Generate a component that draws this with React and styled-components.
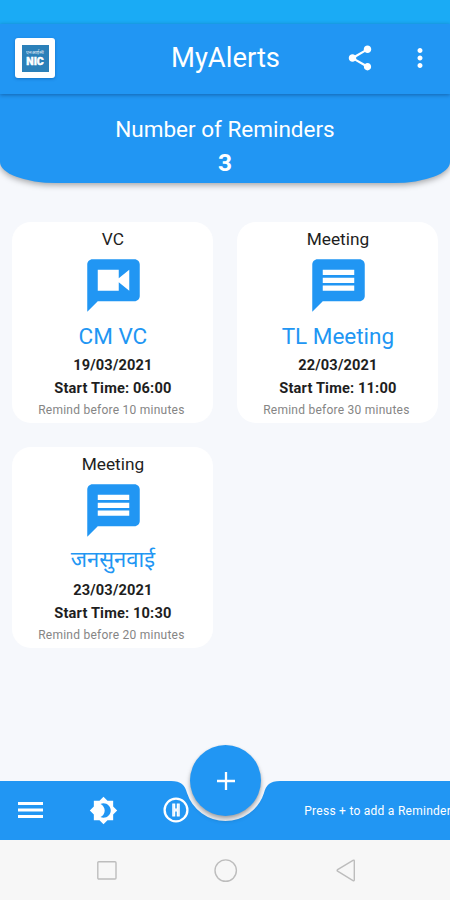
import styled, { createGlobalStyle } from "styled-components";
import { MdShare, MdMoreVert, MdMessage, MdBrightness4 } from "react-icons/md";

const VideoChat = ({ size }) => (
    <svg width={size} height={size} viewBox="0 0 24 24" fill="currentColor">
        <path d="M20 2H4c-1.1 0-2 .9-2 2v18l4-4h14c1.1 0 2-.9 2-2V4c0-1.1-.9-2-2-2zm-2 12l-4-3.2V14H6V6h8v3.2L18 6v8z" />
    </svg>
)

const reminders = [
    { type: "VC", title: "CM VC", date: "19/03/2021", time: "06:00", before: 10, Icon: VideoChat },
    { type: "Meeting", title: "TL Meeting", date: "22/03/2021", time: "11:00", before: 30, Icon: MdMessage },
    { type: "Meeting", title: "जनसुनवाई", date: "23/03/2021", time: "10:30", before: 20, Icon: MdMessage, hindi: true },
];

export default function App() {
    return (
        <Screen>
            <GlobalStyle />
            <StatusBar />
            <AppBar>
                <Logo>
                    <LogoInner>
                        <small>एनआईसी</small>
                        <b>NIC</b>
                    </LogoInner>
                </Logo>
                <AppTitle>MyAlerts</AppTitle>
                <Actions>
                    <MdShare size={30} />
                    <MdMoreVert size={30} />
                </Actions>
            </AppBar>
            <Summary>
                <p>Number of Reminders</p>
                <strong>{reminders.length}</strong>
            </Summary>
            <Grid>
                {reminders.map(({ type, title, date, time, before, Icon, hindi }) => (
                    <Card key={title}>
                        <Type>{type}</Type>
                        <Icon size={63} />
                        <Title $hindi={hindi}>{title}</Title>
                        <When>{date}</When>
                        <When>Start Time: {time}</When>
                        <Before>Remind before {before} minutes</Before>
                    </Card>
                ))}
            </Grid>
            <BottomBar>
                <AddButton>
                    <svg width="18" height="18" viewBox="0 0 18 18">
                        <path d="M9 0v18M0 9h18" stroke="#fff" strokeWidth="2.3" />
                    </svg>
                </AddButton>
                <BarIcons>
                    <svg width="25" height="16" viewBox="0 0 25 16">
                        <path d="M0 1.5h25M0 8h25M0 14.5h25" stroke="#fff" strokeWidth="2.9" />
                    </svg>
                    <MdBrightness4 size={29} />
                    <svg width="26" height="26" viewBox="0 0 26 26" fill="none" stroke="#fff">
                        <circle cx="13" cy="13" r="11.4" strokeWidth="2.3" />
                        <path
                            d="M9.9 7.2h1.7v4.9h2.8V7.2h1.7v11.6h-1.7v-4.9h-2.8v4.9H9.9z"
                            strokeWidth="1.3"
                            fill="#c4e3fc"
                        />
                    </svg>
                </BarIcons>
                <Hint>Press + to add a Reminder</Hint>
            </BottomBar>
            <NavBar>
                <svg width="20" height="19" viewBox="0 0 20 19">
                    <rect x="0.8" y="0.8" width="18.2" height="17.2" rx="1" />
                </svg>
                <svg width="24" height="24" viewBox="0 0 24 24">
                    <circle cx="10.7" cy="11.6" r="10.7" />
                </svg>
                <svg width="20" height="23" viewBox="0 0 20 23">
                    <path d="M17 1.3 1.6 10.6q-1 .8 0 1.6L17 21.6q1.3.6 1.3-.8V2q0-1.3-1.3-.7z" />
                </svg>
            </NavBar>
        </Screen>
    )
}

const GlobalStyle = createGlobalStyle`
* {
    box-sizing: border-box;
}
body {
    margin: 0;
    background-color: #f6f8fc;
    font-family: Roboto, "Noto Sans", sans-serif;
}
p {
    margin: 0;
}
`
const Screen = styled.div`
width: 450px;
height: 900px;
display: flex;
flex-direction: column;
overflow: hidden;
background-color: #f6f8fc;
`
const StatusBar = styled.div`
height: 24px;
flex-shrink: 0;
background-color: #1aabf5;
`
const AppBar = styled.header`
height: 70px;
flex-shrink: 0;
padding: 0 14px 0 15px;
display: grid;
grid-template-columns: 1fr auto 1fr;
align-items: center;
color: #ffffff;
background-color: #2196f3;
box-shadow: 0 1px 4px rgba(0, 40, 90, 0.45);
z-index: 1;
`
const Logo = styled.div`
width: 40px;
height: 40px;
padding: 6.5px;
margin-top: -2px;
border-radius: 3px;
background-color: #ffffff;
box-shadow: 0 1px 3px rgba(0, 50, 110, 0.35);
`
const LogoInner = styled.div`
height: 27px;
display: flex;
flex-direction: column;
align-items: center;
justify-content: center;
background-color: #2b80b9;
small {
    font-size: 5px;
    line-height: 7px;
    opacity: 0.85;
}
b {
    font-size: 10.5px;
    line-height: 12px;
    font-weight: 900;
    -webkit-text-stroke: 0.4px #ffffff;
}
`
const AppTitle = styled.h1`
margin: 0 0 2px;
font-size: 27.4px;
font-weight: 400;
line-height: 34px;
`
const Actions = styled.div`
display: flex;
justify-content: flex-end;
align-items: center;
gap: 30px;
margin-top: -2px;
margin-right: 1px;
`
const Summary = styled.section`
height: 89px;
flex-shrink: 0;
padding-top: 21px;
text-align: center;
color: #ffffff;
background-color: #2196f3;
border-radius: 0 0 56px 56px / 0 0 21px 21px;
box-shadow: 0 2px 6px rgba(0, 0, 0, 0.35);
p {
    font-size: 22.5px;
    line-height: 28px;
}
strong {
    display: block;
    font-size: 24.5px;
    line-height: 40px;
}
`
const Grid = styled.main`
flex: 1;
padding: 39px 12px 0 12.4px;
display: grid;
grid-template-columns: 201px 201px;
grid-auto-rows: 201px;
gap: 24.4px 24px;
`
const Card = styled.article`
display: flex;
flex-direction: column;
align-items: center;
padding-top: 6px;
border-radius: 19px;
background-color: #ffffff;
color: #1e1e1e;
svg {
    flex-shrink: 0;
    margin-top: 4px;
    margin-left: 1px;
    color: #2196f3;
}
`
const Type = styled.p`
font-size: 17.3px;
line-height: 22px;
`
const Title = styled.h2`
margin: 5px 0 3px;
height: 28px;
font-size: ${({ $hindi }) => ($hindi ? "22px" : "22.5px")};
font-weight: 400;
line-height: ${({ $hindi }) => ($hindi ? "26px" : "28px")};
color: #2196f3;
`
const When = styled.p`
font-size: 14.6px;
line-height: 23px;
font-weight: 700;
letter-spacing: 0.16px;
position: relative;
top: 0.5px;
`
const Before = styled.p`
font-size: 12px;
line-height: 22px;
letter-spacing: 0.24px;
margin-right: 3px;
color: #858585;
`
const BottomBar = styled.footer`
position: relative;
height: 59px;
flex-shrink: 0;
display: flex;
align-items: center;
color: #ffffff;
&::before {
    content: "";
    position: absolute;
    inset: 0;
    background-color: #2196f3;
    clip-path: path("M0 0H171C181 0 185 4 187 12A40.5 40.5 0 0 0 264 12C266 4 270 0 280 0H450V59H0Z");
}
`
const AddButton = styled.button`
position: absolute;
left: 190px;
top: -36px;
width: 71px;
height: 71px;
padding: 0;
display: flex;
align-items: center;
justify-content: center;
border: 0;
border-radius: 50%;
background-color: #2196f3;
box-shadow: 0 4px 5px rgba(0, 0, 0, 0.25), 0 1px 3px rgba(0, 0, 0, 0.15);
`
const BarIcons = styled.div`
position: relative;
width: 171px;
margin-left: 18px;
margin-top: -1px;
display: flex;
align-items: center;
justify-content: space-between;
`
const Hint = styled.p`
position: relative;
margin-left: auto;
margin-right: -1px;
font-size: 12px;
letter-spacing: 0.26px;
white-space: nowrap;
`
const NavBar = styled.nav`
height: 60px;
flex-shrink: 0;
display: flex;
align-items: center;
justify-content: space-between;
padding: 1px 94px 0 97px;
background-color: #f7f7f7;
svg {
    fill: none;
    stroke: #bdbdbd;
    stroke-width: 1.4;
    overflow: visible;
}
`
